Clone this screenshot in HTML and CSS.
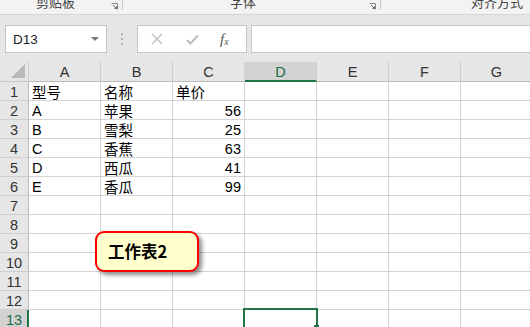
FILE: index.html
```html
<!DOCTYPE html>
<html lang="zh">
<head>
<meta charset="utf-8">
<link rel="stylesheet" href="styles.css">
</head>
<body>
<div class="app">
  <div class="ribbon">
    <div class="group g1"><span class="glabel">剪贴板</span><span class="launcher"><svg width="7" height="7" viewBox="0 0 7 7"><path d="M0.5 0.5H6.5V6.5" fill="none" stroke="#888" stroke-width="1"/><path d="M2 2L5.5 5.5M3.5 5.5H5.5V3.5" fill="none" stroke="#666" stroke-width="1"/></svg></span></div>
    <div class="group g2"><span class="glabel">字体</span><span class="launcher"><svg width="7" height="7" viewBox="0 0 7 7"><path d="M0.5 0.5H6.5V6.5" fill="none" stroke="#888" stroke-width="1"/><path d="M2 2L5.5 5.5M3.5 5.5H5.5V3.5" fill="none" stroke="#666" stroke-width="1"/></svg></span></div>
    <div class="group g3"><span class="glabel">对齐方式</span></div>
  </div>
  <div class="fbar">
    <div class="namebox"><span>D13</span><svg class="dd" width="8" height="4" viewBox="0 0 8 4"><path d="M0 0H8L4 4Z" fill="#777"/></svg></div>
    <div class="dots"><i></i><i></i><i></i></div>
    <div class="fbtns">
      <svg width="12" height="12" viewBox="0 0 12 12"><path d="M1 1L11 11M11 1L1 11" stroke="#bdbdbd" stroke-width="1.4" fill="none"/></svg>
      <svg width="13" height="11" viewBox="0 0 13 11"><path d="M1 6L4.5 9.5L12 1.5" stroke="#bdbdbd" stroke-width="2" fill="none"/></svg>
      <span class="fx">f<sub>x</sub></span>
    </div>
    <div class="finput"></div>
  </div>
  <div class="sheet">
    <div class="corner"><svg width="14" height="14" viewBox="0 0 14 14"><path d="M14 0V14H0Z" fill="#b8b8b8"/></svg></div>
    <div class="ch">A</div><div class="ch">B</div><div class="ch">C</div><div class="ch sel">D</div><div class="ch">E</div><div class="ch">F</div><div class="ch">G</div>

    <div class="rh">1</div><div class="c">型号</div><div class="c">名称</div><div class="c">单价</div><div class="c"></div><div class="c"></div><div class="c"></div><div class="c"></div>
    <div class="rh">2</div><div class="c">A</div><div class="c">苹果</div><div class="c n">56</div><div class="c"></div><div class="c"></div><div class="c"></div><div class="c"></div>
    <div class="rh">3</div><div class="c">B</div><div class="c">雪梨</div><div class="c n">25</div><div class="c"></div><div class="c"></div><div class="c"></div><div class="c"></div>
    <div class="rh">4</div><div class="c">C</div><div class="c">香蕉</div><div class="c n">63</div><div class="c"></div><div class="c"></div><div class="c"></div><div class="c"></div>
    <div class="rh">5</div><div class="c">D</div><div class="c">西瓜</div><div class="c n">41</div><div class="c"></div><div class="c"></div><div class="c"></div><div class="c"></div>
    <div class="rh">6</div><div class="c">E</div><div class="c">香瓜</div><div class="c n">99</div><div class="c"></div><div class="c"></div><div class="c"></div><div class="c"></div>
    <div class="rh">7</div><div class="c"></div><div class="c"></div><div class="c"></div><div class="c"></div><div class="c"></div><div class="c"></div><div class="c"></div>
    <div class="rh">8</div><div class="c"></div><div class="c"></div><div class="c"></div><div class="c"></div><div class="c"></div><div class="c"></div><div class="c"></div>
    <div class="rh">9</div><div class="c"></div><div class="c"></div><div class="c"></div><div class="c"></div><div class="c"></div><div class="c"></div><div class="c"></div>
    <div class="rh">10</div><div class="c"></div><div class="c"></div><div class="c"></div><div class="c"></div><div class="c"></div><div class="c"></div><div class="c"></div>
    <div class="rh">11</div><div class="c"></div><div class="c"></div><div class="c"></div><div class="c"></div><div class="c"></div><div class="c"></div><div class="c"></div>
    <div class="rh">12</div><div class="c"></div><div class="c"></div><div class="c"></div><div class="c"></div><div class="c"></div><div class="c"></div><div class="c"></div>
    <div class="rh selr">13</div><div class="c"></div><div class="c"></div><div class="c"></div><div class="c active"><span class="handle"></span></div><div class="c"></div><div class="c"></div><div class="c"></div>

    <div class="callout">工作表2</div>
  </div>
</div>
</body>
</html>
```
FILE: styles.css
```css
html, body {
  margin: 0;
  padding: 0;
  background: #ffffff;
  overflow: hidden;
}
body {
  width: 530px;
  height: 327px;
  font-family: "Liberation Sans", "Noto Sans CJK SC", sans-serif;
}
.app {
  width: 530px;
  height: 327px;
  overflow: hidden;
  display: flex;
  flex-direction: column;
}
.ribbon {
  height: 14px;
  flex: none;
  background: #f3f3f3;
  border-bottom: 1px solid #d6d6d6;
  display: flex;
  overflow: hidden;
}
.group {
  position: relative;
  height: 10px;
  display: flex;
  align-items: flex-end;
  box-sizing: border-box;
}
.group.g1 { width: 123px; border-right: 1px solid #c8c8c8; }
.group.g2 { width: 258px; border-right: 1px solid #c8c8c8; }
.group.g3 { flex: 1; }
.glabel {
  font-family: "Noto Sans CJK SC", sans-serif;
  font-size: 13px;
  line-height: 13px;
  color: #444;
  position: absolute;
  top: -5px;
}
.g1 .glabel { left: 36px; }
.g2 .glabel { left: 107px; }
.g3 .glabel { left: 90px; }
.launcher {
  position: absolute;
  right: 4px;
  top: 3px;
  width: 7px;
  height: 7px;
  display: flex;
}
.fbar {
  height: 47px;
  flex: none;
  background: #e6e6e6;
  display: flex;
  align-items: flex-start;
  padding-top: 10px;
  box-sizing: border-box;
}
.namebox {
  margin-left: 5px;
  width: 102px;
  height: 28px;
  box-sizing: border-box;
  background: #fff;
  border: 1px solid #c6c6c6;
  display: flex;
  align-items: center;
  justify-content: space-between;
  padding: 1px 7px 0 7px;
  font-size: 13.5px;
  color: #222;
}
.namebox .dd { margin-top: -2px; }
.dots {
  width: 30px;
  height: 28px;
  display: flex;
  flex-direction: column;
  align-items: center;
  justify-content: center;
  gap: 3px;
}
.dots i {
  display: block;
  width: 2px;
  height: 2px;
  background: #b5b5b5;
}
.fbtns {
  width: 110px;
  height: 28px;
  box-sizing: border-box;
  background: #fff;
  border: 1px solid #c6c6c6;
  display: flex;
  align-items: center;
  padding-left: 13px;
  gap: 23px;
}
.fx {
  font-family: "Liberation Serif", serif;
  font-style: italic;
  font-size: 15px;
  color: #555;
  line-height: 1;
  margin-left: -2px;
}
.fx sub {
  font-size: 10px;
  vertical-align: -1px;
}
.finput {
  margin-left: 4px;
  flex: 1;
  height: 28px;
  box-sizing: border-box;
  background: #fff;
  border: 1px solid #c6c6c6;
  border-right: none;
}
.sheet {
  position: relative;
  display: grid;
  grid-template-columns: 29px repeat(7, 72px);
  grid-template-rows: 20px repeat(13, 19px);
  flex: none;
}
.corner {
  background: #e6e6e6;
  border-right: 1px solid #cfcfcf;
  border-bottom: 1px solid #c8c8c8;
  box-sizing: border-box;
  display: flex;
  align-items: flex-end;
  justify-content: flex-end;
  padding: 0 3px 3px 0;
}
.ch {
  background: #e6e6e6;
  border-right: 1px solid #cfcfcf;
  border-bottom: 1px solid #bcbcbc;
  box-sizing: border-box;
  font-size: 14.5px;
  color: #333;
  display: flex;
  align-items: center;
  justify-content: center;
  padding-top: 1px;
}
.ch.sel {
  background: #d2d2d2;
  border-bottom: 2px solid #217346;
  color: #1e6b43;
}
.rh {
  background: #e6e6e6;
  border-right: 1px solid #bcbcbc;
  border-bottom: 1px solid #cfcfcf;
  box-sizing: border-box;
  font-size: 14.5px;
  color: #333;
  display: flex;
  align-items: center;
  justify-content: center;
  padding-top: 1px;
}
.rh.selr {
  background: #d2d2d2;
  border-right: 2px solid #217346;
  color: #1e6b43;
  padding-left: 1px;
}
.c {
  border-right: 1px solid #d4d4d4;
  border-bottom: 1px solid #d4d4d4;
  box-sizing: border-box;
  font-family: "Liberation Sans", "Noto Sans CJK SC", sans-serif;
  font-size: 14.5px;
  color: #000;
  display: flex;
  align-items: center;
  padding: 1px 3px 0 3px;
  white-space: nowrap;
  overflow: hidden;
}
.c.n {
  justify-content: flex-end;
}
.c.active {
  position: relative;
  overflow: visible;
  border: 2px solid #217346;
  border-bottom: none;
  margin: -2px 0 0 -2px;
  width: 75px;
  height: 21px;
}
.handle {
  position: absolute;
  right: -3px;
  bottom: 2px;
  width: 5px;
  height: 2px;
  background: #217346;
}
.callout {
  position: absolute;
  left: 95px;
  top: 169px;
  width: 104px;
  height: 41px;
  box-sizing: border-box;
  background: #ffffcc;
  border: 2px solid #ff0000;
  border-radius: 9px;
  box-shadow: 3px 3px 4px rgba(0, 0, 0, 0.45);
  font-family: "Noto Sans CJK SC", sans-serif;
  font-weight: bold;
  font-size: 16.5px;
  color: #000;
  display: flex;
  align-items: center;
  padding: 0 0 2px 11px;
}
```
